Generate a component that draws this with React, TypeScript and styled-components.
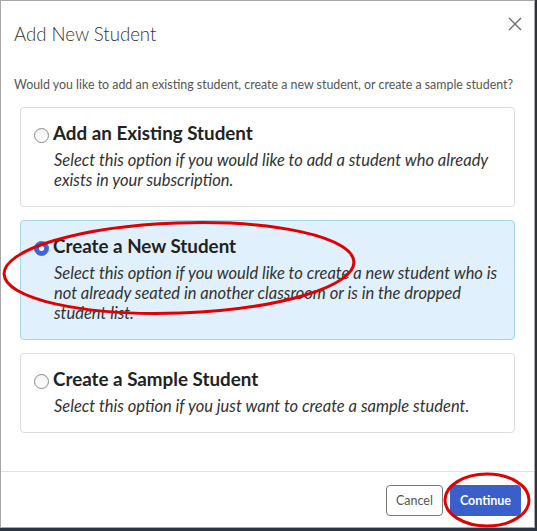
import React, { useState } from "react";
import styled, { createGlobalStyle } from "styled-components";

const GlobalStyle = createGlobalStyle`
  html, body {
    margin: 0;
    padding: 0;
    background: #2b3440;
  }
  body {
    font-family: "Lato", "Open Sans", sans-serif;
  }
`;

const Dialog = styled.div`
  position: relative;
  box-sizing: border-box;
  width: 535px;
  height: 528px;
  background: #ffffff;
  border: 1px solid #a8a8a8;
  display: flex;
  flex-direction: column;
`;

const Header = styled.div`
  display: flex;
  justify-content: space-between;
  align-items: flex-start;
  padding: 21px 13px 0 13px;
`;

const Title = styled.h2`
  margin: 0;
  font-size: 18.6px;
  font-weight: 300;
  color: #333333;
  line-height: 24px;
`;

const CloseButton = styled.button`
  border: none;
  background: none;
  padding: 0;
  margin: -7px -3px 0 0;
  width: 18px;
  height: 18px;
  cursor: pointer;
  display: flex;
  align-items: center;
  justify-content: center;
`;

const Body = styled.div`
  flex: 1;
  padding: 0 19px 0 13px;
  display: flex;
  flex-direction: column;
`;

const Question = styled.p`
  margin: 31px 0 14px 0;
  font-size: 12.4px;
  color: #555555;
  line-height: 16px;
  white-space: nowrap;
`;

const Options = styled.div`
  display: flex;
  flex-direction: column;
  gap: 13px;
  padding-left: 6px;
`;

const Card = styled.label<{ $active: boolean }>`
  box-sizing: border-box;
  display: flex;
  align-items: flex-start;
  gap: 4px;
  padding: 14px 14px 16px 13px;
  border-radius: 4px;
  border: 1px solid ${(p) => (p.$active ? "#a6d2ea" : "#dcdcdc")};
  background: ${(p) => (p.$active ? "#e0f0fc" : "#ffffff")};
  cursor: pointer;
`;

const Radio = styled.span<{ $checked: boolean }>`
  box-sizing: border-box;
  flex: none;
  width: 15px;
  height: 15px;
  margin-top: 6px;
  border-radius: 50%;
  display: flex;
  align-items: center;
  justify-content: center;
  border: 1px solid ${(p) => (p.$checked ? "#3d67d6" : "#8a8a8a")};
  background: ${(p) =>
    p.$checked ? "#3d67d6" : "linear-gradient(#f2f2f2, #ffffff)"};
  &::after {
    content: "";
    width: 5px;
    height: 5px;
    border-radius: 50%;
    background: #ffffff;
    display: ${(p) => (p.$checked ? "block" : "none")};
  }
`;

const CardText = styled.div`
  display: flex;
  flex-direction: column;
`;

const CardTitle = styled.span`
  font-size: 18.8px;
  font-weight: 700;
  color: #222222;
  line-height: 22px;
`;

const CardDesc = styled.span`
  margin-top: 6px;
  padding-left: 1px;
  font-size: 16.5px;
  font-style: italic;
  color: #333333;
  line-height: 20px;
`;

const Footer = styled.div`
  display: flex;
  justify-content: flex-end;
  gap: 7px;
  padding: 13px 13px 11px 0;
  border-top: 1px solid #e2e2e2;
`;

const Button = styled.button<{ $primary?: boolean }>`
  box-sizing: border-box;
  height: 31px;
  padding: 0 9px;
  border-radius: 4px;
  font-family: "Lato", sans-serif;
  font-size: 12.5px;
  font-weight: ${(p) => (p.$primary ? 700 : 400)};
  color: ${(p) => (p.$primary ? "#ffffff" : "#555555")};
  background: ${(p) => (p.$primary ? "#3a5fcb" : "#ffffff")};
  border: 1px solid ${(p) => (p.$primary ? "#3a5fcb" : "#7a7a7a")};
  cursor: pointer;
`;

const Annotations = styled.svg`
  position: absolute;
  left: 0;
  top: 0;
  pointer-events: none;
`;

const options = [
  {
    id: "existing",
    title: "Add an Existing Student",
    desc: "Select this option if you would like to add a student who already exists in your subscription.",
  },
  {
    id: "new",
    title: "Create a New Student",
    desc: "Select this option if you would like to create a new student who is not already seated in another classroom or is in the dropped student list.",
  },
  {
    id: "sample",
    title: "Create a Sample Student",
    desc: "Select this option if you just want to create a sample student.",
  },
];

const App: React.FC = () => {
  const [selected, setSelected] = useState("new");

  return (
    <>
      <GlobalStyle />
      <Dialog>
        <Header>
          <Title>Add New Student</Title>
          <CloseButton aria-label="Close">
            <svg width="14" height="14" viewBox="0 0 14 14">
              <path
                d="M1 1 L13 13 M13 1 L1 13"
                stroke="#6b6b6b"
                strokeWidth="1.4"
                fill="none"
              />
            </svg>
          </CloseButton>
        </Header>
        <Body>
          <Question>
            Would you like to add an existing student, create a new student, or
            create a sample student?
          </Question>
          <Options>
            {options.map((opt) => (
              <Card
                key={opt.id}
                $active={selected === opt.id}
                onClick={() => setSelected(opt.id)}
              >
                <Radio $checked={selected === opt.id} />
                <CardText>
                  <CardTitle>{opt.title}</CardTitle>
                  <CardDesc>{opt.desc}</CardDesc>
                </CardText>
              </Card>
            ))}
          </Options>
        </Body>
        <Footer>
          <Button>Cancel</Button>
          <Button $primary>Continue</Button>
        </Footer>
        <Annotations width="535" height="528">
          <ellipse
            cx="178"
            cy="267"
            rx="175"
            ry="45"
            transform="rotate(-2 178 267)"
            fill="none"
            stroke="#e00000"
            strokeWidth="3"
          />
          <ellipse
            cx="486"
            cy="499"
            rx="42"
            ry="26"
            fill="none"
            stroke="#e00000"
            strokeWidth="3"
          />
        </Annotations>
      </Dialog>
    </>
  );
};

export default App;
